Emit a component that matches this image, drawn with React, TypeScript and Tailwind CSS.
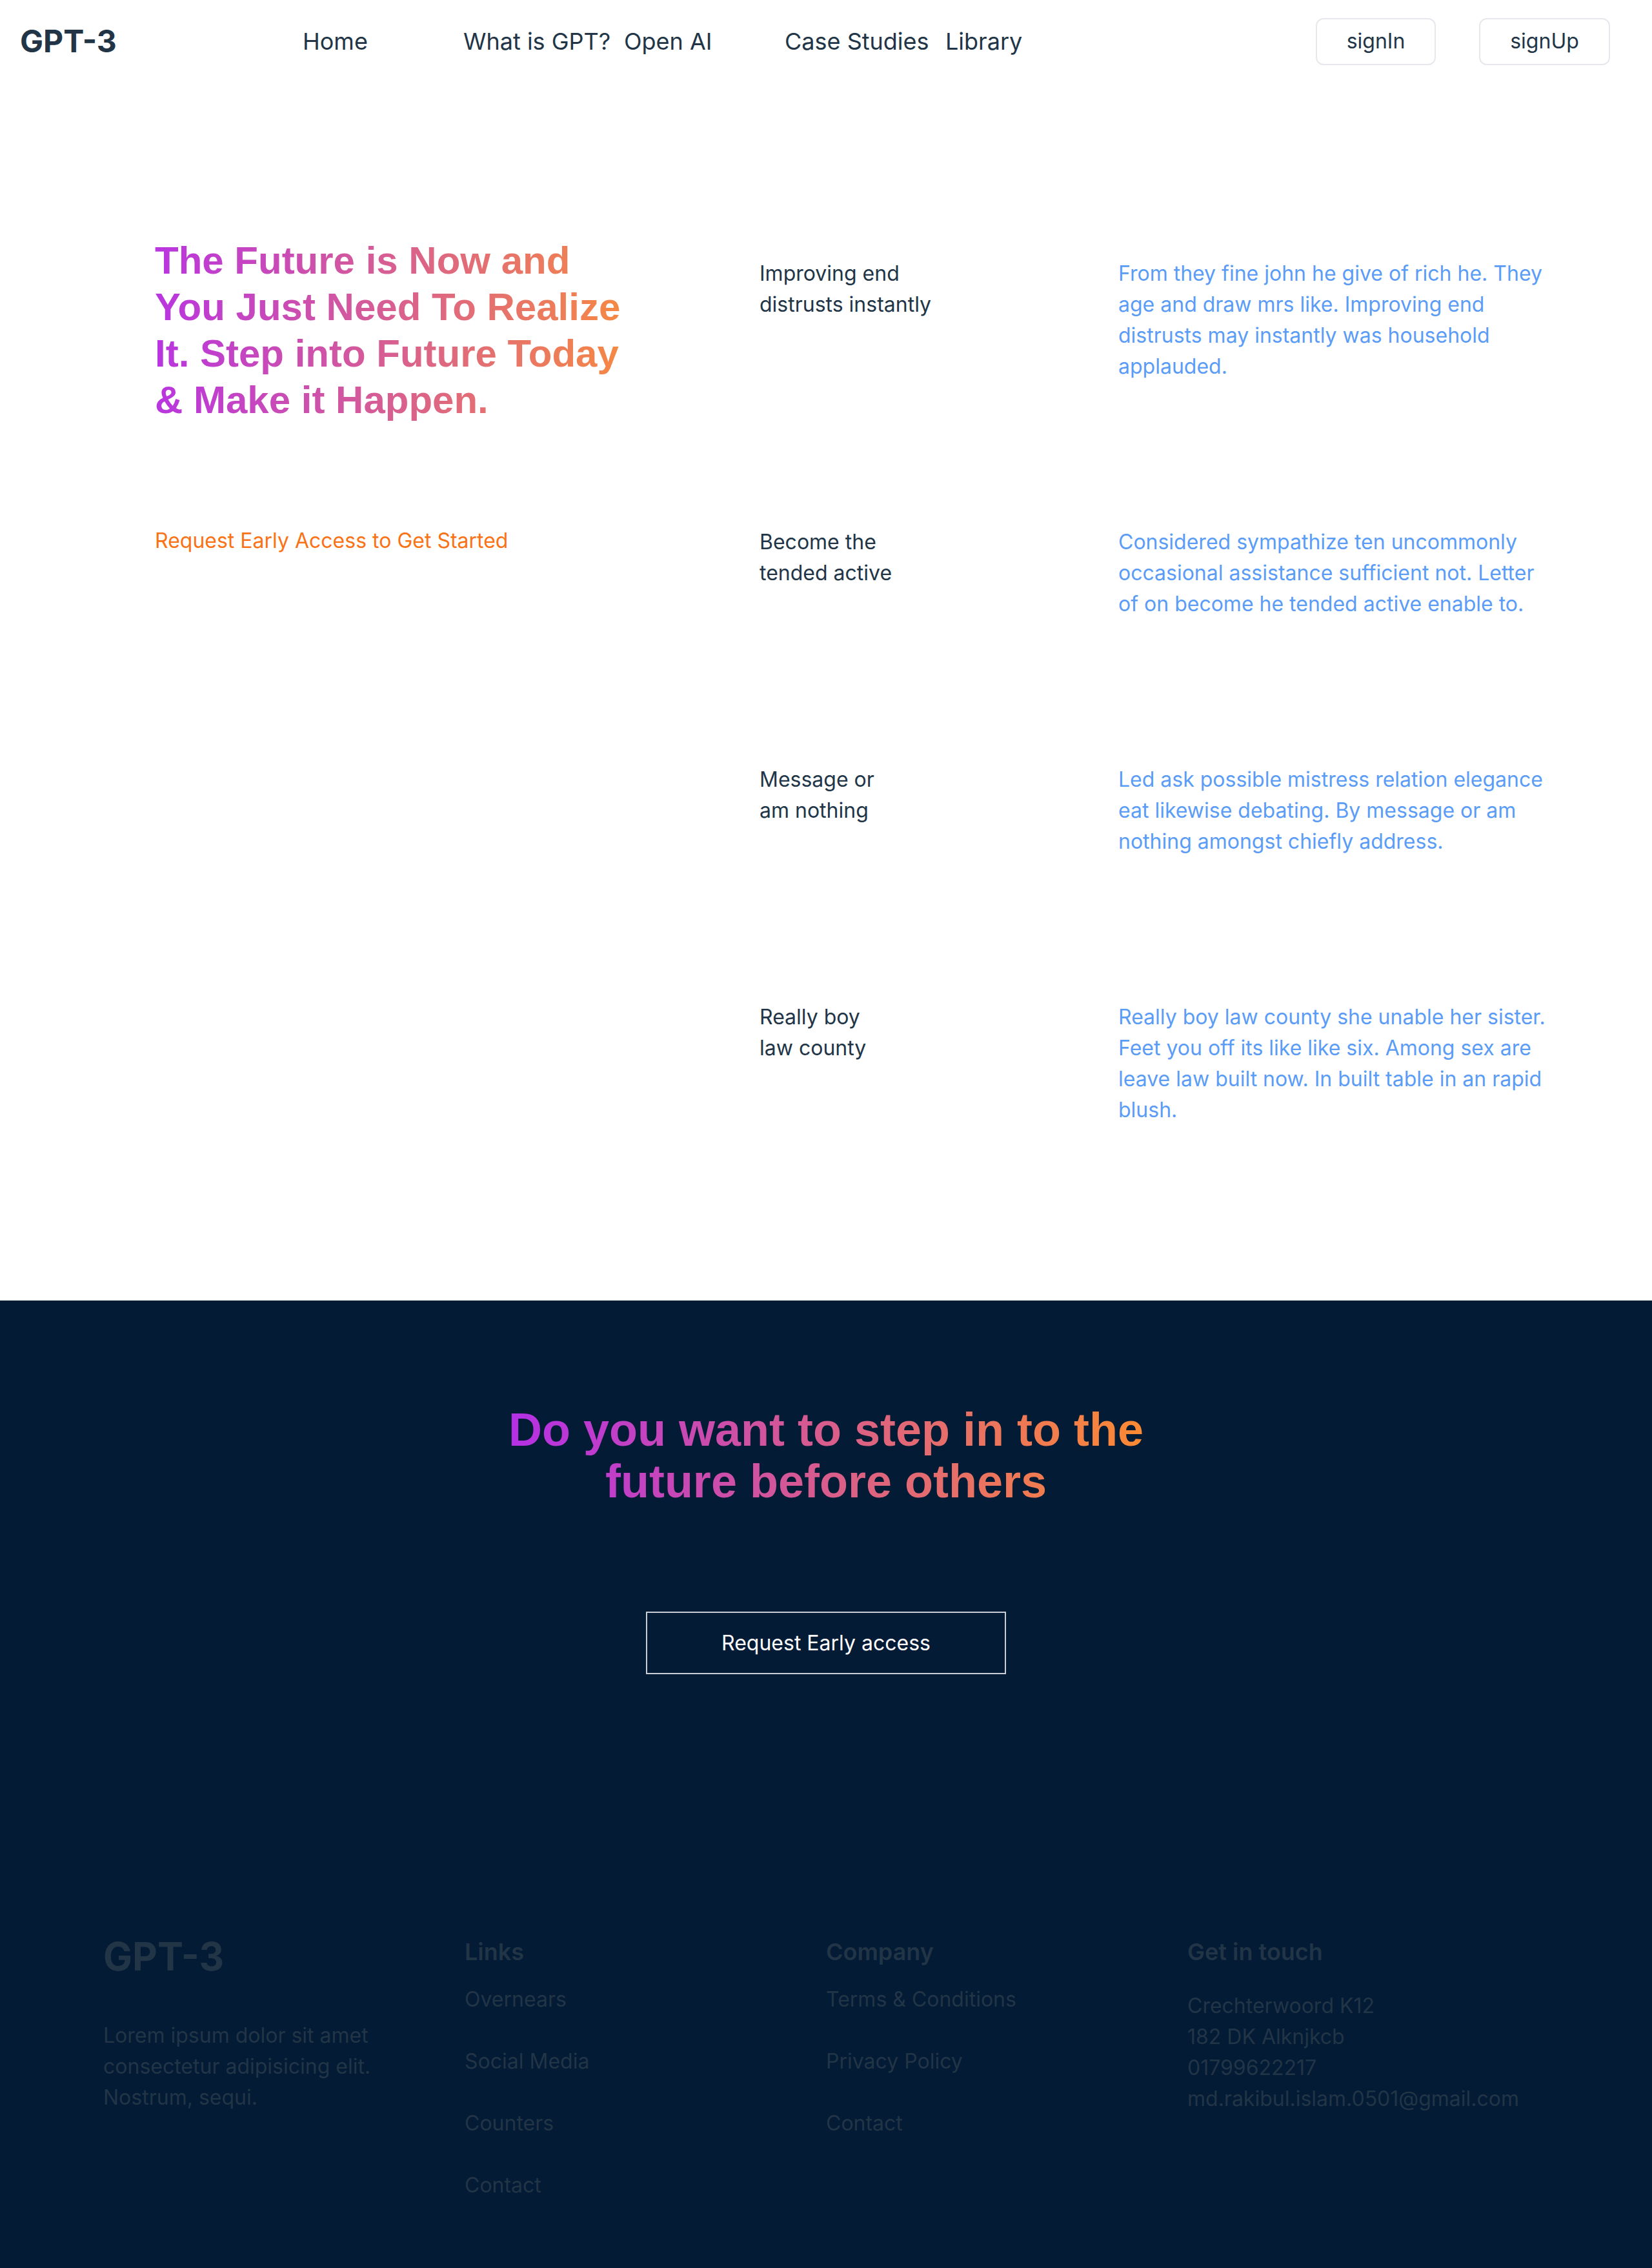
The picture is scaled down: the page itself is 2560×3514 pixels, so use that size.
import React from "react";

const features = [
  {
    title: ["Improving end", "distrusts instantly"],
    text: "From they fine john he give of rich he. They age and draw mrs like. Improving end distrusts may instantly was household applauded.",
  },
  {
    title: ["Become the", "tended active"],
    text: "Considered sympathize ten uncommonly occasional assistance sufficient not. Letter of on become he tended active enable to.",
  },
  {
    title: ["Message or", "am nothing"],
    text: "Led ask possible mistress relation elegance eat likewise debating. By message or am nothing amongst chiefly address.",
  },
  {
    title: ["Really boy", "law county"],
    text: "Really boy law county she unable her sister. Feet you off its like like six. Among sex are leave law built now. In built table in an rapid blush.",
  },
];

export default function App() {
  return (
    <div className="flex min-h-[3514px] w-[2560px] flex-col bg-white text-[#213547] font-['Inter',sans-serif]">
      {/* NAV */}
      <nav className="flex h-[128px] items-center pl-[31px] pr-[65px]">
        <div className="w-[438px] text-[48px] font-bold leading-[64px]">GPT-3</div>
        <div className="flex text-[36px] leading-[56px]">
          <a className="w-[249px]">Home</a>
          <a className="w-[249px]">What is GPT?</a>
          <a className="w-[249px]">Open AI</a>
          <a className="w-[249px]">Case Studies</a>
          <a className="w-[249px]">Library</a>
        </div>
        <div className="ml-auto flex items-center gap-[67px]">
          <button className="flex h-[73px] w-[186px] items-center justify-center rounded-[12px] border-2 border-[#e7e7ed] bg-white text-[32px] text-[#213547]">
            signIn
          </button>
          <button className="flex h-[73px] w-[203px] items-center justify-center rounded-[12px] border-2 border-[#e7e7ed] bg-white text-[32px] text-[#213547]">
            signUp
          </button>
        </div>
      </nav>

      {/* HERO */}
      <section className="flex items-start pl-[240px] pt-[240px] pb-[271px]">
        <div className="w-[937px] shrink-0">
          <h1 className="w-[740px] bg-linear-to-r/srgb from-[#b935e0] to-[#f78a40] bg-clip-text font-['Liberation_Sans',Arial,sans-serif] text-[60px] font-bold leading-[72px] text-transparent">
            The Future is Now and You Just Need To Realize It. Step into Future Today &amp; Make it Happen.
          </h1>
          <p className="mt-[158px] text-[32px] leading-[48px] text-[#f97316]">
            Request Early Access to Get Started
          </p>
        </div>
        <div className="flex flex-col gap-[224px] pt-[32px]">
          {features.map((f) => (
            <div key={f.text} className="flex items-start">
              <div className="w-[556px] shrink-0 text-[32px] leading-[48px] text-[#213547]">
                {f.title[0]}
                <br />
                {f.title[1]}
              </div>
              <p className="w-[674px] text-[32px] leading-[48px] text-[#5b9cf6]">{f.text}</p>
            </div>
          ))}
        </div>
      </section>

      {/* CTA + FOOTER */}
      <section className="flex-1 bg-[#031b34] pt-[160px] pb-[100px]">
        <div className="flex justify-center">
          <h2 className="w-[990px] bg-linear-to-r/srgb from-[#b42fe6] to-[#fd8a32] bg-clip-text text-center font-['Liberation_Sans',Arial,sans-serif] text-[72px] font-bold leading-[80px] text-transparent">
            Do you want to step in to the future before others
          </h2>
        </div>
        <div className="mt-[162px] flex justify-center">
          <button className="h-[97px] w-[558px] border-2 border-[#c9ced6] text-[32px] leading-[48px] text-white">
            Request Early access
          </button>
        </div>

        <footer className="mt-[401px] grid grid-cols-4 px-[160px] text-[#213547]">
          <div>
            <div className="text-[60px] font-bold leading-[72px]">GPT-3</div>
            <p className="mt-[63px] max-w-[500px] text-[32px] leading-[48px]">
              Lorem ipsum dolor sit amet consectetur adipisicing elit. Nostrum, sequi.
            </p>
          </div>
          <div>
            <h4 className="mt-[3px] text-[36px] font-semibold leading-[52px]">Links</h4>
            <ul className="mt-[24px] flex flex-col gap-[48px] text-[32px] leading-[48px]">
              <li>Overnears</li>
              <li>Social Media</li>
              <li>Counters</li>
              <li>Contact</li>
            </ul>
          </div>
          <div>
            <h4 className="mt-[3px] text-[36px] font-semibold leading-[52px]">Company</h4>
            <ul className="mt-[24px] flex flex-col gap-[48px] text-[32px] leading-[48px]">
              <li>Terms &amp; Conditions</li>
              <li>Privacy Policy</li>
              <li>Contact</li>
            </ul>
          </div>
          <div>
            <h4 className="mt-[3px] text-[36px] font-semibold leading-[52px]">Get in touch</h4>
            <div className="mt-[34px] text-[32px] leading-[48px]">
              <p>Crechterwoord K12</p>
              <p>182 DK Alknjkcb</p>
              <p>01799622217</p>
              <p>md.rakibul.islam.0501@gmail.com</p>
            </div>
          </div>
        </footer>
      </section>
    </div>
  );
}
